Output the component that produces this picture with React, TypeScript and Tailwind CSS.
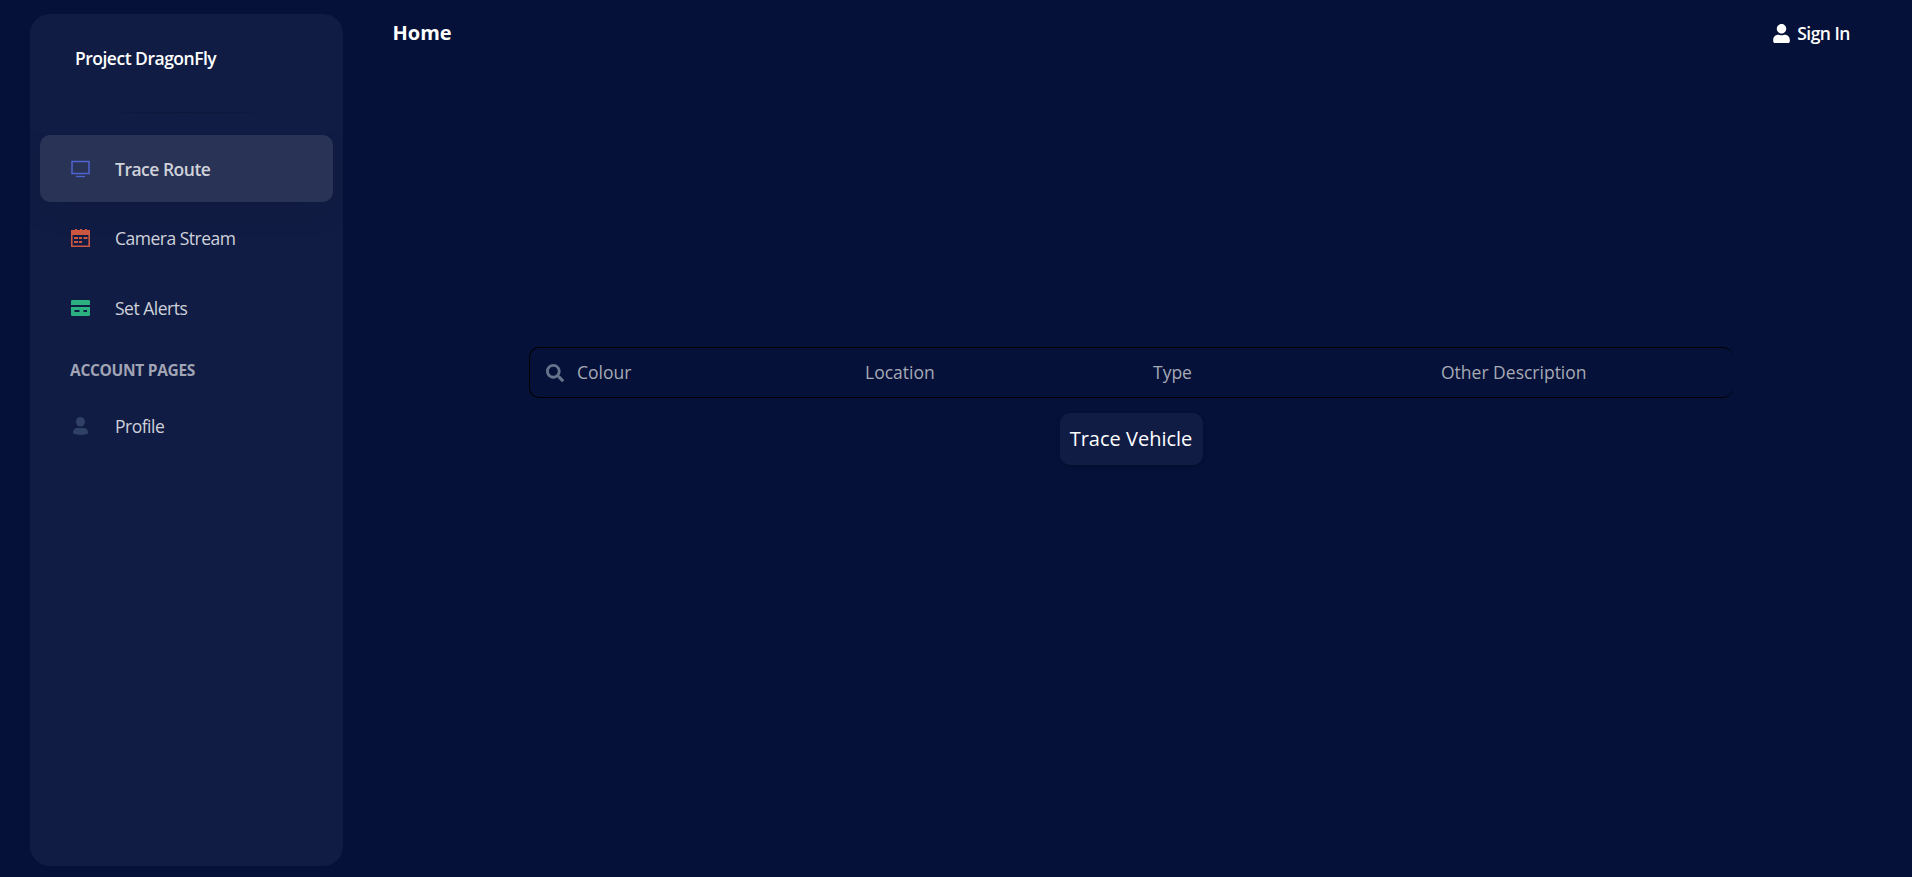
import type { ReactNode } from "react";

function MonitorIcon() {
  return (
    <svg width="19" height="18" viewBox="0 0 19 18" fill="none" stroke="#5064d0">
      <path d="M1 1.5h17v12H1z" strokeWidth="1.5" />
      <path d="M5 16.5h9" strokeWidth="1.3" />
    </svg>
  );
}

function CalendarIcon() {
  return (
    <svg width="19" height="18" viewBox="0 0 19 18" fill="#cc5640">
      <path
        fillRule="evenodd"
        d="M0 1h4V0h2v1h3V0h2v1h3V0h2v1h3v17H0zM1.6 6v10.500h15.800V6z"
      />
      <path d="M3 8h4v2H3zM8 8h3v2H8zM12.500 8h4v2h-4zM3 12h4v2H3zM8 12h3v2H8z" />
    </svg>
  );
}

function CardIcon() {
  return (
    <svg width="19" height="16" viewBox="0 0 19 16" fill="#2bb07f">
      <path d="M1.300 0h16.400Q19 0 19 1.300V5H0V1.300Q0 0 1.300 0z" />
      <path
        fillRule="evenodd"
        d="M0 7h19v7.700q0 1.300-1.300 1.300H1.300Q0 16 0 14.700zM3.500 10v2h5v-2zM12.500 10v2h3.500v-2z"
      />
    </svg>
  );
}

function PersonIcon() {
  return (
    <svg width="15" height="18" viewBox="0 0 15 18" fill="#2f4265">
      <ellipse cx="7.5" cy="4.8" rx="4.5" ry="4.8" />
      <path d="M3.600 11h7.800Q15 11.500 15 16.600Q12 18 7.500 18T0 16.600Q0 11.500 3.600 11z" />
    </svg>
  );
}

function UserIcon() {
  return (
    <svg width="17" height="19" viewBox="0 0 448 512" fill="#fff">
      <path d="M224 256c70.700 0 128-57.300 128-128S294.700 0 224 0 96 57.300 96 128s57.300 128 128 128zm89.600 32h-16.700c-22.200 10.200-46.900 16-72.900 16s-50.600-5.800-72.900-16h-16.700C60.200 288 0 348.200 0 422.400V464c0 26.500 21.500 48 48 48h352c26.500 0 48-21.500 48-48v-41.600c0-74.200-60.200-134.400-134.400-134.400z" />
    </svg>
  );
}

function SearchIcon() {
  return (
    <svg width="18" height="18" viewBox="0 0 512 512" fill="#64748b">
      <path d="M505 442.700L405.300 343c-4.500-4.500-10.600-7-17-7H372c27.600-35.300 44-79.700 44-128C416 93.100 322.900 0 208 0S0 93.100 0 208s93.100 208 208 208c48.300 0 92.700-16.400 128-44v16.300c0 6.400 2.500 12.500 7 17l99.700 99.700c9.400 9.400 24.600 9.400 33.900 0l28.300-28.300c9.400-9.400 9.400-24.600.1-34zM208 336c-70.700 0-128-57.200-128-128 0-70.700 57.200-128 128-128 70.700 0 128 57.200 128 128 0 70.700-57.200 128-128 128z" />
    </svg>
  );
}

function NavItem({ icon, label, active = false }: { icon: ReactNode; label: string; active?: boolean }) {
  return (
    <a
      href="#"
      className={
        active
          ? "mx-2.5 flex h-[67px] items-center rounded-[10px] bg-[#293356] pl-5 font-semibold shadow-[0_10px_34px_0_rgba(0,0,0,0.06)]"
          : "mx-2.5 flex h-[67px] items-center pl-5"
      }
    >
      <span className="flex w-[41px] shrink-0 justify-center">{icon}</span>
      <span className="ml-[14px] text-[17.5px] leading-[26px] tracking-[-0.5px] text-[#cfd2da]">{label}</span>
    </a>
  );
}

const fields = ["Colour", "Location", "Type", "Other Description"];

export default function App() {
  return (
    <div className="flex h-[877px] overflow-hidden bg-[#051139] font-['Open_Sans','Noto_Sans',sans-serif] text-white">
      <aside className="mt-3.5 ml-[30px] h-[852px] w-[313px] shrink-0 rounded-[20px] bg-[#111c44]">
        <div className="h-[98px] pt-[31px] pl-[45px] text-[17.5px] leading-[26px] font-semibold tracking-[-0.5px]">
          Project DragonFly
        </div>
        <div className="h-px bg-linear-to-r from-transparent via-black/15 to-transparent" />
        <nav className="mt-[20px] overflow-hidden pt-0.5">
          <NavItem icon={<MonitorIcon />} label="Trace Route" active />
          <div className="h-0.5" />
          <NavItem icon={<CalendarIcon />} label="Camera Stream" />
          <div className="h-[3px]" />
          <NavItem icon={<CardIcon />} label="Set Alerts" />
          <h6 className="mt-[18px] ml-10 text-[15.5px] leading-[22px] font-bold tracking-[-0.3px] text-[#a0a4b4]">
            ACCOUNT PAGES
          </h6>
          <div className="h-[11px]" />
          <NavItem icon={<PersonIcon />} label="Profile" />
        </nav>
      </aside>

      <main className="flex min-w-0 flex-1 flex-col">
        <header className="flex h-[66px] items-center justify-between pr-[62px] pl-[49.5px]">
          <h1 className="pb-0.5 text-[20px] leading-[25px] font-bold">Home</h1>
          <a href="#" className="flex items-center gap-[7px] text-[17.5px] leading-[26px] font-semibold tracking-[-0.5px]">
            <UserIcon />
            <span>Sign In</span>
          </a>
        </header>

        <section className="mt-[281px] ml-[186px] flex w-[1204px] flex-col items-center">
          <div className="flex h-[51px] w-full items-center rounded-[10px] border border-r-0 border-black pl-[15.5px]">
            <SearchIcon />
            <div className="ml-[13.5px] grid flex-1 grid-cols-[288px_288px_288px_1fr] text-[17.5px] leading-[25px] text-[#a5aab4]">
              {fields.map((field) => (
                <span key={field}>{field}</span>
              ))}
            </div>
          </div>
          <button className="mt-[15px] h-[52px] w-[143px] rounded-[10px] bg-[#111c44] text-[20px] leading-[30px] font-medium whitespace-nowrap shadow-[0_2px_5px_-1px_rgba(0,0,0,0.25)]">
            Trace Vehicle
          </button>
        </section>
      </main>
    </div>
  );
}
